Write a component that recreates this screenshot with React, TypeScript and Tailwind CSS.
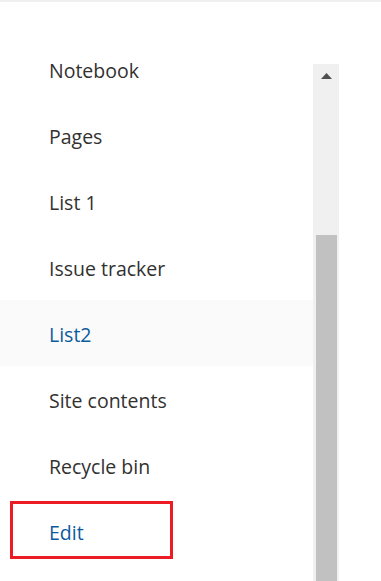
const NAV_ITEMS = [
  { title: "Notebook" },
  { title: "Pages" },
  { title: "List 1" },
  { title: "Issue tracker" },
  { title: "List2", hovered: true },
  { title: "Site contents" },
  { title: "Recycle bin" },
  { title: "Edit", highlighted: true },
];

function ScrollBar() {
  return (
    <div className="mt-[62px] flex w-[26px] flex-col items-center bg-[#f0f0f0]">
      <div className="flex h-[24px] w-full items-center justify-center">
        <svg width="11" height="6" viewBox="0 0 11 6">
          <polygon points="5.5,0 11,6 0,6" fill="#505050" />
        </svg>
      </div>
      <div className="mt-[147px] h-[400px] w-[21px] bg-[#c1c1c1]" />
    </div>
  );
}

export default function App() {
  return (
    <div
      className="h-[581px] w-[381px] overflow-hidden bg-white"
      style={{ fontFamily: '"Segoe UI", "Open Sans", sans-serif' }}
    >
      <div className="h-[2px] w-full bg-[#efefef]" />
      <div className="flex">
        <ul className="w-[313px] pt-[34px]">
          {NAV_ITEMS.map((item) => (
            <li
              key={item.title}
              className={`relative flex h-[66px] items-center pl-[49px] pt-[3px] text-[19.5px] font-[380] ${
                item.hovered ? "bg-[#fafafa]" : ""
              } ${item.hovered || item.highlighted ? "text-[#0b5a9e]" : "text-[#323130]"}`}
            >
              {item.title}
              {item.highlighted && (
                <span className="absolute left-[10px] top-[3px] h-[58px] w-[163px] border-[3px] border-[#ed1c24]" />
              )}
            </li>
          ))}
        </ul>
        <ScrollBar />
      </div>
    </div>
  );
}
